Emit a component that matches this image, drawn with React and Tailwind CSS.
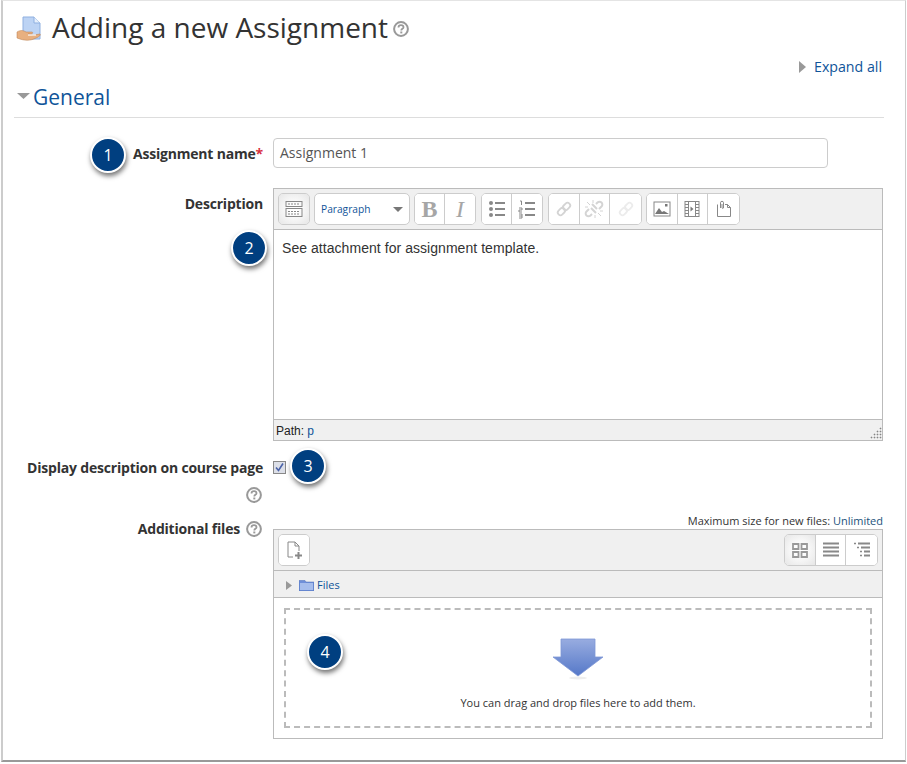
const Badge = ({ n, className }) => (
  <div
    className={`absolute w-[36px] h-[36px] rounded-full bg-[#003f80] border-2 border-white shadow-[1px_3px_5px_rgba(0,0,0,0.55)] flex items-center justify-center text-white text-[16px] font-['Open_Sans',sans-serif] ${className}`}
  >
    {n}
  </div>
);

const HelpIcon = ({ className = '' }) => (
  <svg width="16" height="16" viewBox="0 0 16 16" className={`shrink-0 ${className}`}>
    <circle cx="8" cy="8" r="6.9" fill="#fff" stroke="#999" strokeWidth="2" />
    <path d="M5.5 6.4c0-1.5 1.1-2.3 2.5-2.3s2.5.8 2.5 2.1c0 1.6-2.2 1.6-2.2 3.2" fill="none" stroke="#999" strokeWidth="1.8" />
    <rect x="7.3" y="10.5" width="2" height="1.9" fill="#999" />
  </svg>
);

const Btn = ({ children, active, w = 'w-[30px]', className = '' }) => (
  <div
    className={`${w} h-full flex items-center justify-center ${active ? 'bg-[radial-gradient(circle,#fff_20%,#e6e6e6_100%)]' : 'bg-white'} ${className}`}
  >
    {children}
  </div>
);

const Group = ({ children, className = '' }) => (
  <div className={`flex h-[32px] rounded-[5px] border border-[#ccc] overflow-hidden divide-x divide-[#ccc] bg-white ${className}`}>
    {children}
  </div>
);

const Svg = ({ children, size = 20 }) => (
  <svg width={size} height={size} viewBox="0 0 20 20">
    {children}
  </svg>
);

const KeyboardIcon = () => (
  <Svg>
    <rect x="2" y="2.5" width="16" height="5" fill="none" stroke="#888" />
    <rect x="2" y="9.5" width="16" height="8" fill="none" stroke="#888" />
    <path d="M4 5h12M4 12.5h12M4 15h12" stroke="#888" strokeDasharray="2 1" />
  </Svg>
);

const LinkIcon = ({ color }) => (
  <Svg size={18}>
    <g fill="none" stroke={color} strokeWidth="2" transform="rotate(-45 10 10)">
      <rect x="1.5" y="7" width="9" height="6" rx="3" />
      <rect x="9.5" y="7" width="9" height="6" rx="3" />
    </g>
  </Svg>
);

const UnlinkIcon = () => (
  <Svg>
    <g fill="none" stroke="#d4d4d4" strokeWidth="2">
      <path d="M8 15l-1.5 1.5a2.8 2.8 0 0 1-4-4L5 10" />
      <path d="M12 5l1.5-1.5a2.8 2.8 0 0 1 4 4L15 10" />
      <path d="M7 9l5 5M8 5l5 5" />
    </g>
    <path d="M3 3l3 3M9 1v3M1 8h3M16 12h3M11 16v3M14 14l3 3" stroke="#d4d4d4" />
  </Svg>
);

const ImageIcon = () => (
  <Svg>
    <rect x="2" y="3" width="16" height="14" fill="#fff" stroke="#888" />
    <path d="M3 15l4-6 3 4 2-1 5 3z" fill="#777" />
    <rect x="13" y="5" width="2.5" height="2.5" fill="#777" />
  </Svg>
);

const VideoIcon = () => (
  <Svg>
    <rect x="3" y="2.5" width="14" height="15" fill="#fff" stroke="#888" />
    <path d="M6.5 2.5v15M13.5 2.5v15" stroke="#888" />
    <path d="M3 5.5h3.5M3 8.5h3.5M3 11.5h3.5M3 14.5h3.5M13.5 5.5H17M13.5 8.5H17M13.5 11.5H17M13.5 14.5H17" stroke="#888" />
    <path d="M8.5 7.5l3 2.5-3 2.5z" fill="#777" />
  </Svg>
);

const AttachIcon = () => (
  <Svg>
    <path d="M3.5 5.5v12h13V8.5l-3-3H11" fill="none" stroke="#888" />
    <path d="M13.5 5.5v3h3" fill="none" stroke="#888" />
    <path d="M6.5 9V3.8a1.5 1.5 0 0 1 3 0V9a1 1 0 0 1-1.5 0V5" fill="none" stroke="#888" />
  </Svg>
);

const NewFileIcon = () => (
  <Svg>
    <path d="M9 17H4V2h7l4 4v5" fill="none" stroke="#888" />
    <path d="M11 2v4h4" fill="none" stroke="#888" />
    <path d="M11 15.5h7M14.5 12v7" stroke="#888" strokeWidth="2" />
  </Svg>
);

const Field = ({ label, children, className = '' }) => (
  <div className={`flex ${className}`}>
    <div className="w-[246px] flex flex-col items-end">{label}</div>
    <div className="ml-[10px] flex-1 min-w-0">{children}</div>
  </div>
);

const labelCls = "font-bold text-[14px] leading-[20px] text-[#333] font-['Open_Sans',sans-serif] tracking-[-0.2px]";

export default function App() {
  return (
    <div className="w-[907px] h-[764px] bg-white overflow-hidden font-['Open_Sans',sans-serif]">
      <div className="relative w-[905px] h-[762px] ml-px border-l-2 border-r border-t border-b-2 border-l-[#ccc] border-r-[#ccc] border-t-[#e4e4e4] border-b-[#999] pl-[14px] pr-[22px] pt-[10px]">
        <div className="flex items-center h-[32px]">
          <svg width="26" height="26" viewBox="0 0 26 26" className="mr-[10px] mt-[3px] -ml-[1px]">
            <path d="M7 1h11l6 6v16H7z" fill="#bcd3f4" stroke="#8fb0e0" />
            <path d="M18 1v6h6" fill="#e6effc" stroke="#8fb0e0" />
            <path d="M1 16c3-2 6-2 9 0h6c1 0 1 2-1 2h-3l6 1 6-1c1 1-1 3-4 4-6 3-11 3-19 0z" fill="#e8b080" stroke="#b87a48" strokeWidth="0.5" />
            <path d="M12 19h8" stroke="#fff" strokeWidth="1.2" />
          </svg>
          <h1 className="text-[28px] leading-[32px] text-[#333] font-normal">Adding a new Assignment</h1>
          <HelpIcon className="ml-[5px] mt-[3px]" />
        </div>

        <div className="flex justify-end items-center h-[20px] mt-[14px] mr-px text-[14.2px] text-[#0f5499]">
          <svg width="7" height="12" viewBox="0 0 7 12" className="mr-[8px]">
            <path d="M0 0l7 6-7 6z" fill="#999" />
          </svg>
          Expand all
        </div>

        <div className="flex items-center h-[30px] mt-[5px] border-b border-[#ddd] -ml-[3px] pl-[3px] -mr-px box-content pb-[5px]">
          <svg width="13" height="6" viewBox="0 0 13 6" className="mr-[3px] mt-[-3px]">
            <path d="M0 0h13l-6.5 6z" fill="#999" />
          </svg>
          <h2 className="text-[21px] text-[#0f5499] font-normal leading-[30px]">General</h2>
        </div>

        <Field
          className="mt-[20px]"
          label={
            <div className={`${labelCls} mt-[6px]`}>
              Assignment name<span className="text-[#d9333f]">*</span>
            </div>
          }
        >
          <div className="w-[555px] h-[30px] rounded-[4px] border border-[#ccc] px-[6px] text-[14px] leading-[28px] text-[#555]">
            Assignment 1
          </div>
        </Field>

        <Field
          className="mt-[20px]"
          label={<div className={`${labelCls} mt-[6px]`}>Description</div>}
        >
          <div className="h-[253px] border border-[#bbb] flex flex-col">
            <div className="h-[41px] bg-[#f0f0f0] border-b border-[#bbb] flex items-center pl-[4px] gap-[4px]">
              <Group>
                <Btn active>
                  <KeyboardIcon />
                </Btn>
              </Group>
              <Group>
                <div className="w-[94px] flex items-center justify-between pl-[6px] pr-[6px] text-[10.2px] text-[#0f5499]">
                  <span className="mt-[2px]">Paragraph</span>
                  <svg width="10" height="5" viewBox="0 0 10 5">
                    <path d="M0 0h10l-5 5z" fill="#777" />
                  </svg>
                </div>
              </Group>
              <Group>
                <Btn>
                  <span className="font-['Liberation_Serif',serif] font-bold text-[24px] leading-none text-[#a6a6a6]">B</span>
                </Btn>
                <Btn>
                  <span className="font-['Liberation_Serif',serif] italic text-[24px] leading-none text-[#a6a6a6]">I</span>
                </Btn>
              </Group>
              <Group className="ml-px">
                <Btn>
                  <Svg>
                    <circle cx="4" cy="4" r="2" fill="#888" />
                    <circle cx="4" cy="10" r="2" fill="#888" />
                    <circle cx="4" cy="16" r="2" fill="#888" />
                    <path d="M8 4h10M8 10h10M8 16h10" stroke="#888" strokeWidth="2" />
                  </Svg>
                </Btn>
                <Btn>
                  <Svg>
                    <path d="M8 4h10M8 10h10M8 16h10" stroke="#888" strokeWidth="2" />
                    <path d="M3 2h1.5v4M2 9h3v2H2v2h3M2 15h3v2H2M5 17v2H2" fill="none" stroke="#888" />
                  </Svg>
                </Btn>
              </Group>
              <Group className="ml-px">
                <Btn w="w-[30.67px]">
                  <LinkIcon color="#d4d4d4" />
                </Btn>
                <Btn w="w-[30.67px]">
                  <UnlinkIcon />
                </Btn>
                <Btn w="w-[30.67px]">
                  <LinkIcon color="#ececec" />
                </Btn>
              </Group>
              <Group>
                <Btn w="w-[30.67px]">
                  <ImageIcon />
                </Btn>
                <Btn w="w-[30.67px]">
                  <VideoIcon />
                </Btn>
                <Btn w="w-[30.67px]">
                  <AttachIcon />
                </Btn>
              </Group>
            </div>
            <div className="flex-1 px-[8px] pt-[8px] text-[14px] leading-[20px] tracking-[0.05px] text-[#333] font-['Liberation_Sans',sans-serif]">
              See attachment for assignment template.
            </div>
            <div className="relative h-[21px] bg-[#f0f0f0] border-t border-[#bbb] px-[2px] pt-px text-[12px] leading-[20px] text-[#222] font-['Liberation_Sans',sans-serif]">
              Path: <span className="text-[#0f5499]">p</span>
              <svg width="14" height="14" viewBox="0 0 14 14" className="absolute right-0 bottom-0">
                <path
                  d="M12 2h1v1h-1zM9 5h1v1H9zM12 5h1v1h-1zM6 8h1v1H6zM9 8h1v1H9zM12 8h1v1h-1zM3 11h1v1H3zM6 11h1v1H6zM9 11h1v1H9zM12 11h1v1h-1z"
                  fill="#888"
                  stroke="#888"
                  strokeWidth="0.6"
                />
              </svg>
            </div>
          </div>
        </Field>

        <Field
          className="mt-[17px]"
          label={
            <>
              <div className={labelCls}>Display description on course page</div>
              <HelpIcon className="mt-[9px] mr-[1px]" />
            </>
          }
        >
          <div className="w-[13px] h-[13px] mt-[3px] border border-[#888] bg-[#dcdfe8] flex items-center justify-center">
            <svg width="11" height="11" viewBox="0 0 11 11">
              <path d="M2 5.5l2.5 3L9 1.5" fill="none" stroke="#4a62a8" strokeWidth="1.6" />
            </svg>
          </div>
        </Field>

        <Field
          className="mt-[10px]"
          label={
            <div className="flex items-center mt-[6px]">
              <div className={labelCls}>Additional files</div>
              <HelpIcon className="ml-[6px] mr-[1px]" />
            </div>
          }
        >
          <div className="h-[16px] text-right text-[11px] leading-[16px] text-[#333]">
            Maximum size for new files: <span className="text-[#23527c]">Unlimited</span>
          </div>
          <div className="h-[210px] border border-[#bbb] flex flex-col">
            <div className="h-[41px] bg-[#f0f0f0] border-b border-[#bbb] flex items-center justify-between px-[4px]">
              <Group>
                <Btn>
                  <NewFileIcon />
                </Btn>
              </Group>
              <Group>
                <Btn active w="w-[30.67px]">
                  <Svg>
                    <path d="M3 4h5.5v5H3zM11.5 4H17v5h-5.5zM3 12h5.5v5H3zM11.5 12H17v5h-5.5z" fill="none" stroke="#999" strokeWidth="1.8" />
                  </Svg>
                </Btn>
                <Btn w="w-[30.67px]">
                  <Svg>
                    <path d="M2 3.5h16M2 7.5h16M2 11.5h16M2 15.5h16" stroke="#888" strokeWidth="2" />
                  </Svg>
                </Btn>
                <Btn w="w-[30.67px]">
                  <Svg>
                    <path d="M6 3.5h12M9 7.5h9M12 11.5h6M12 15.5h6" stroke="#888" strokeWidth="2" />
                    <path d="M2 3.5h2M5 7.5h2M8 11.5h2M8 15.5h2" stroke="#888" strokeWidth="1.5" />
                  </Svg>
                </Btn>
              </Group>
            </div>
            <div className="h-[27px] bg-[#f0f0f0] border-b border-[#bbb] flex items-center pl-[12px] pt-[2px] text-[11px] text-[#0f5499]">
              <svg width="6" height="9" viewBox="0 0 6 9" className="mr-[7px]">
                <path d="M0 0l6 4.5L0 9z" fill="#999" />
              </svg>
              <svg width="15" height="12" viewBox="0 0 15 12" className="mr-[3px]">
                <path d="M0 1.5h6l1 1.5h8v9H0z" fill="#6f8fd8" stroke="#4a6cb8" strokeWidth="0.5" />
                <rect x="1" y="4" width="13" height="7" fill="#a6bdec" />
              </svg>
              Files
            </div>
            <div className="flex-1 p-[10px]">
              <div className="h-[120px] border-2 border-dashed border-[#bbb] flex flex-col items-center pt-[28px]">
                <svg width="52" height="44" viewBox="0 0 52 44">
                  <defs>
                    <linearGradient id="arrowFill" x1="0" y1="0" x2="0" y2="1">
                      <stop offset="0" stopColor="#98ace0" />
                      <stop offset="1" stopColor="#5578c8" />
                    </linearGradient>
                  </defs>
                  <ellipse cx="26" cy="40" rx="9" ry="1.5" fill="#eee" />
                  <path d="M9 1h34v18h8L26 38 1 19h8z" fill="url(#arrowFill)" stroke="#7f97d6" strokeWidth="0.8" />
                </svg>
                <div className="mt-[13px] text-[11px] leading-[16px] text-[#333]">You can drag and drop files here to add them.</div>
              </div>
            </div>
          </div>
        </Field>

        <Badge n="1" className="left-[87px] top-[136px]" />
        <Badge n="2" className="left-[228px] top-[229px]" />
        <Badge n="3" className="left-[287px] top-[447px]" />
        <Badge n="4" className="left-[304px] top-[633px]" />
      </div>
    </div>
  );
}
